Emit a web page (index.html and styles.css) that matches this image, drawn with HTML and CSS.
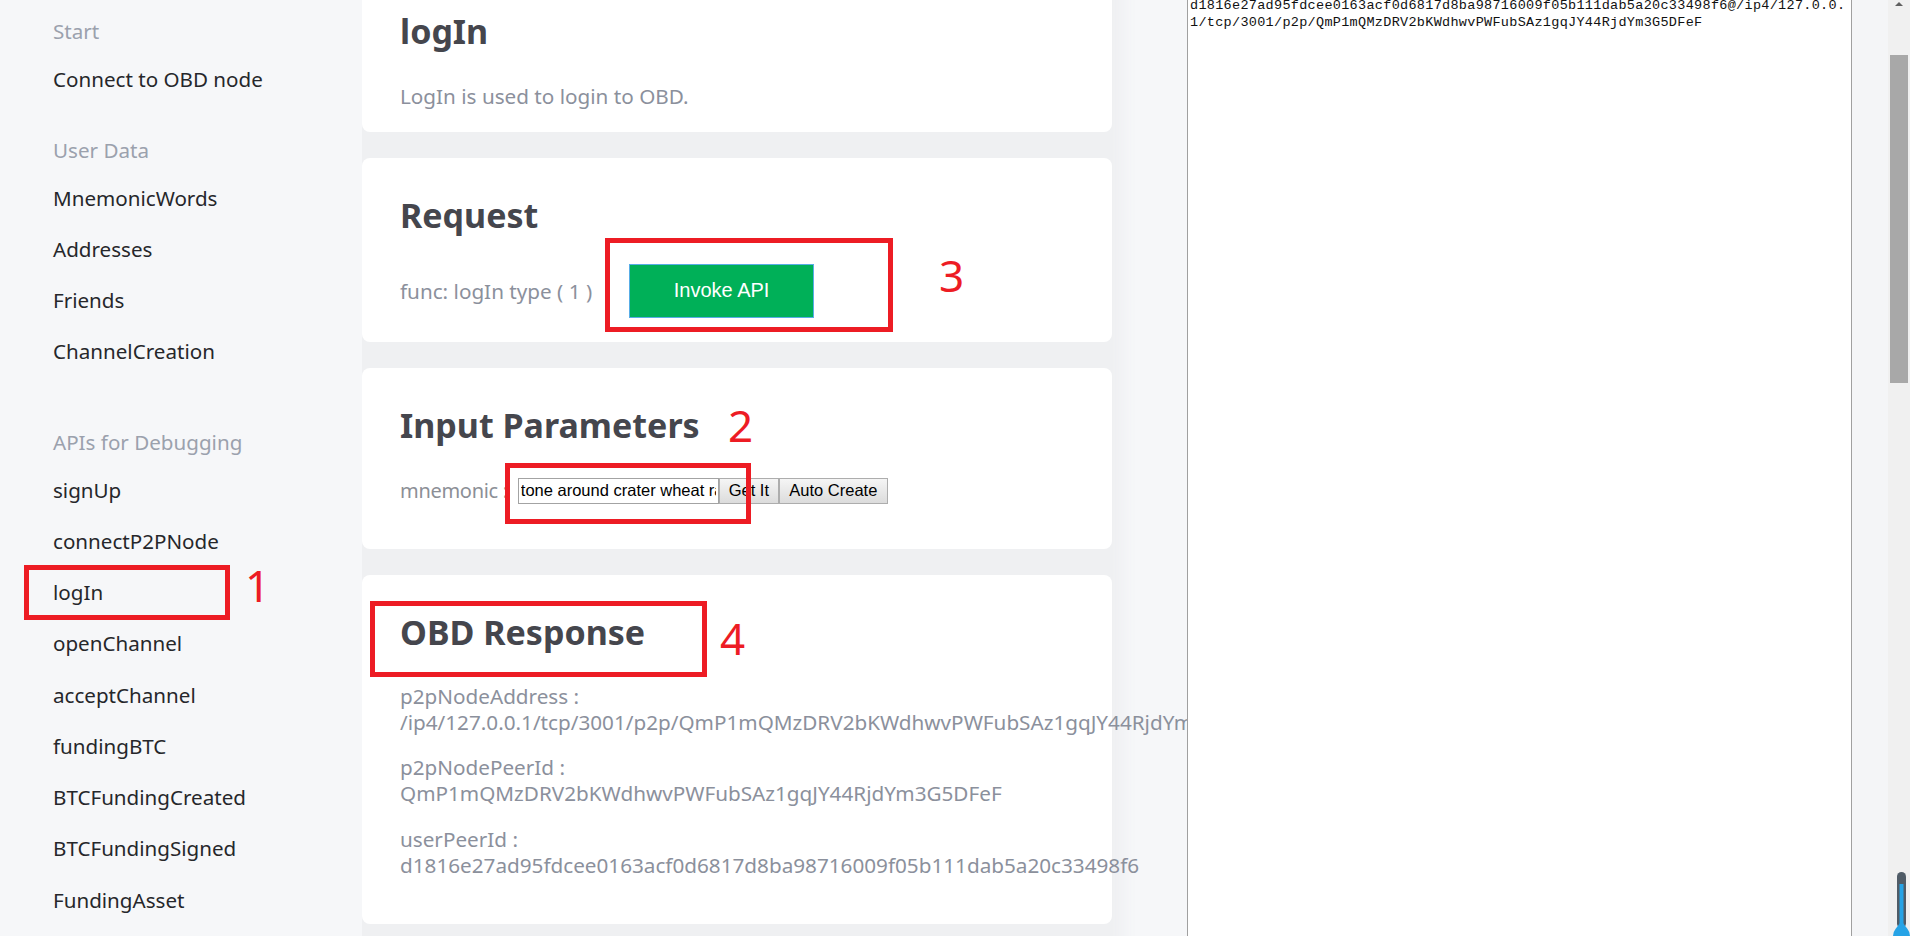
FILE: index.html
```html
<!DOCTYPE html>
<html lang="en">
<head>
<meta charset="utf-8">
<title>logIn</title>
<link rel="stylesheet" href="styles.css">
</head>
<body>
<div class="app">
  <nav class="sidebar">
    <div class="group">
      <div class="group-title">Start</div>
      <div class="item">Connect to OBD node</div>
    </div>
    <div class="group group-user">
      <div class="group-title">User Data</div>
      <div class="item">MnemonicWords</div>
      <div class="item">Addresses</div>
      <div class="item">Friends</div>
      <div class="item">ChannelCreation</div>
    </div>
    <div class="group group-api">
      <div class="group-title">APIs for Debugging</div>
      <div class="item">signUp</div>
      <div class="item">connectP2PNode</div>
      <div class="item item-active">logIn
        <span class="mark mark-1"></span>
        <span class="num num-1">1</span>
      </div>
      <div class="item">openChannel</div>
      <div class="item">acceptChannel</div>
      <div class="item">fundingBTC</div>
      <div class="item">BTCFundingCreated</div>
      <div class="item">BTCFundingSigned</div>
      <div class="item">FundingAsset</div>
    </div>
  </nav>

  <main class="main">
    <div class="column">
      <section class="card card-intro">
        <h2>logIn</h2>
        <p class="desc">LogIn is used to login to OBD.</p>
      </section>

      <section class="card card-request">
        <h2>Request</h2>
        <div class="req-row">
          <span class="muted">func: logIn type ( 1 )</span>
          <button class="invoke" type="button">Invoke API</button>
        </div>
        <span class="mark mark-3"></span>
        <span class="num num-3">3</span>
      </section>

      <section class="card card-params">
        <h2>Input Parameters</h2>
        <div class="param-row">
          <span class="param-label">mnemonic :</span>
          <input class="param-input" type="text" value="tone around crater wheat rabbit">
          <button class="sys-btn btn-get" type="button">Get It</button>
          <button class="sys-btn btn-auto" type="button">Auto Create</button>
        </div>
        <span class="mark mark-2"></span>
        <span class="num num-2">2</span>
      </section>

      <section class="card card-response">
        <h2>OBD Response</h2>
        <div class="resp">
          <p>p2pNodeAddress :<br>/ip4/127.0.0.1/tcp/3001/p2p/QmP1mQMzDRV2bKWdhwvPWFubSAz1gqJY44RjdYm3G5DFeF</p>
          <p>p2pNodePeerId :<br>QmP1mQMzDRV2bKWdhwvPWFubSAz1gqJY44RjdYm3G5DFeF</p>
          <p>userPeerId :<br>d1816e27ad95fdcee0163acf0d6817d8ba98716009f05b111dab5a20c33498f6</p>
        </div>
        <span class="mark mark-4"></span>
        <span class="num num-4">4</span>
      </section>
    </div>
  </main>

  <aside class="panel">
    <div class="console"><pre class="console-text">d1816e27ad95fdcee0163acf0d6817d8ba98716009f05b111dab5a20c33498f6@/ip4/127.0.0.
1/tcp/3001/p2p/QmP1mQMzDRV2bKWdhwvPWFubSAz1gqJY44RjdYm3G5DFeF</pre></div>
    <div class="gutter"></div>
    <div class="scrollbar">
      <span class="scroll-arrow"></span>
      <span class="scroll-thumb"></span>
    </div>
    <div class="edge"></div>
  </aside>

  <svg class="thermo" width="17" height="64" viewBox="0 0 17 64" aria-hidden="true">
    <rect x="4" y="0" width="9" height="56" rx="4.5" fill="#505c67"/>
    <rect x="6.5" y="12" width="4" height="44" fill="#26a3e6"/>
    <path d="M8.5 49 L14.5 57 Q17 60 17 64 L0 64 Q0 60 2.5 57 Z" fill="#26a3e6"/>
  </svg>
</div>
</body>
</html>
```

FILE: styles.css
```css
html, body {
  margin: 0;
  padding: 0;
}

body {
  background: #f6f7f9;
  font-family: "Noto Sans", "Open Sans", sans-serif;
  height: 936px;
  overflow: hidden;
}

.app {
  display: flex;
  height: 936px;
  position: relative;
}

/* ---------- sidebar ---------- */
.sidebar {
  width: 340px;
  flex: none;
  padding-top: 9px;
  box-sizing: border-box;
}

.group-title {
  height: 44px;
  display: flex;
  align-items: center;
  padding-left: 53px;
  font-size: 20.6px;
  color: #9ba1ad;
}

.item {
  position: relative;
  height: 51.25px;
  display: flex;
  align-items: center;
  padding-left: 53px;
  font-size: 20.6px;
  color: #26272b;
}

.group-user {
  margin-top: 23.75px;
}

.group-api {
  margin-top: 43px;
}

/* ---------- main column ---------- */
.main {
  width: 847px;
  flex: none;
  overflow: hidden;
  padding-left: 22px;
  box-sizing: border-box;
}

.column {
  width: 750px;
  margin-top: -24px;
  display: flex;
  flex-direction: column;
  gap: 26px;
  background: #eff0f2;
  box-shadow: 16px 0 14px -4px #eff0f2;
  padding-bottom: 60px;
}

.card {
  position: relative;
  background: #ffffff;
  border-radius: 8px;
  padding: 37.5px 38px 0;
}

.card-intro {
  padding-top: 35px;
}

.card h2 {
  margin: 0;
  font-size: 34px;
  line-height: 40.8px;
  font-weight: 700;
  color: #45464d;
}

.desc {
  margin: 31.5px 0 0;
  padding-bottom: 22.5px;
  font-size: 20.7px;
  line-height: 26px;
  color: #8b909c;
}

.req-row {
  margin-top: 27.5px;
  padding-bottom: 24px;
  display: flex;
  align-items: center;
}

.muted {
  font-size: 20.7px;
  color: #8b909c;
}

.invoke {
  margin-left: 37px;
  width: 185px;
  height: 54px;
  box-sizing: border-box;
  background: #00b058;
  border: 1px solid #58ade6;
  color: #ffffff;
  font-family: "Liberation Sans", Arial, sans-serif;
  font-size: 20px;
  padding: 0;
}

.param-row {
  margin-top: 31.9px;
  padding-bottom: 45px;
  display: flex;
  align-items: center;
  height: 26px;
}

.param-label {
  font-size: 20px;
  letter-spacing: -0.3px;
  color: #8c8f96;
  margin-right: 10px;
}

.param-input {
  width: 201px;
  height: 26px;
  box-sizing: border-box;
  border: 1px solid #a3a3a3;
  padding: 0 2px;
  margin: 0;
  font-family: "Liberation Sans", Arial, sans-serif;
  font-size: 16.5px;
  color: #000;
  background: #fff;
}

.sys-btn {
  height: 26px;
  box-sizing: border-box;
  margin: 0;
  padding: 0;
  border: 1px solid #adadad;
  background: linear-gradient(#f5f5f5, #dcdcdc);
  font-family: "Liberation Sans", Arial, sans-serif;
  font-size: 16.5px;
  color: #000;
}

.btn-get {
  width: 60px;
}

.btn-auto {
  width: 109px;
}

.resp {
  margin-top: 29.5px;
  padding-bottom: 46px;
}

.resp p {
  margin: 0 0 19.5px;
  font-size: 20.7px;
  line-height: 26px;
  color: #8b909c;
  white-space: nowrap;
}

.resp p:last-child {
  margin-bottom: 0;
}

/* ---------- red annotations ---------- */
.mark {
  position: absolute;
  box-sizing: border-box;
  border: 5px solid #ed1c24;
}

.num {
  position: absolute;
  font-family: "Noto Sans", sans-serif;
  font-size: 44px;
  line-height: 44px;
  color: #ed1c24;
}

.mark-1 { left: 24px; top: -1.5px; width: 206px; height: 55px; }
.num-1  { left: 245px; top: -3.5px; }

.mark-3 { left: 243px; top: 80px; width: 288px; height: 94px; }
.num-3  { left: 577px; top: 95px; }

.mark-2 { left: 143px; top: 95px; width: 246px; height: 61px; }
.num-2  { left: 366px; top: 35px; }

.mark-4 { left: 8px; top: 26px; width: 337px; height: 76px; }
.num-4  { left: 358px; top: 41px; }

/* ---------- right panel ---------- */
.panel {
  width: 733px;
  flex: none;
  display: flex;
}

.console {
  width: 665px;
  flex: none;
  box-sizing: border-box;
  background: #ffffff;
  border-left: 1px solid #a0a0a0;
  border-right: 1px solid #a0a0a0;
  overflow: hidden;
}

.console-text {
  margin: -3px 0 0 2px;
  font-family: "Liberation Mono", "DejaVu Sans Mono", monospace;
  font-size: 13.5px;
  letter-spacing: 0.3px;
  line-height: 17px;
  color: #111;
}

.gutter {
  width: 36px;
  flex: none;
  background: #f4f5f7;
}

.scrollbar {
  width: 22px;
  flex: none;
  background: #f0f0f0;
  display: flex;
  flex-direction: column;
  align-items: center;
}

.scroll-arrow {
  margin-top: 2px;
  width: 0;
  height: 0;
  border-left: 4px solid transparent;
  border-right: 4px solid transparent;
  border-bottom: 4px solid #606060;
}

.scroll-thumb {
  margin-top: 49px;
  width: 18px;
  height: 328px;
  background: #a8a8a8;
}

.edge {
  width: 10px;
  flex: none;
  background: #ffffff;
}

.thermo {
  position: absolute;
  right: 10px;
  bottom: 0;
}
```
